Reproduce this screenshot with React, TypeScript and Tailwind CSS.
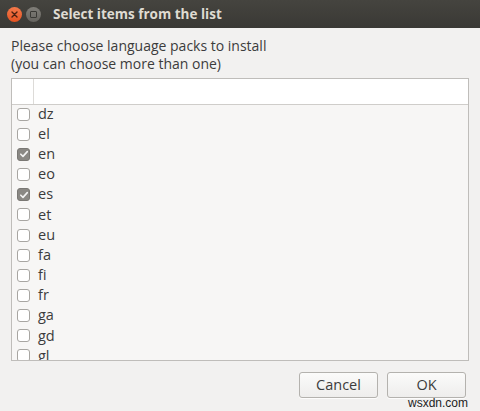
const langs: [string, boolean][] = [
  ["dz", false],
  ["el", false],
  ["en", true],
  ["eo", false],
  ["es", true],
  ["et", false],
  ["eu", false],
  ["fa", false],
  ["fi", false],
  ["fr", false],
  ["ga", false],
  ["gd", false],
  ["gl", false],
];

const Check = ({ on }: { on: boolean }) =>
  on ? (
    <span className="w-[13px] h-[13px] rounded-[3px] bg-[#8a8884] border border-[#7a7874] flex items-center justify-center">
      <svg width="10" height="10" viewBox="0 0 10 10">
        <path d="M1.8 5.2 L4 7.4 L8.3 2.6" fill="none" stroke="#f2f2f2" strokeWidth="1.6" strokeLinecap="round" strokeLinejoin="round" />
      </svg>
    </span>
  ) : (
    <span className="w-[13px] h-[13px] rounded-[3px] bg-white border border-[#a8a6a2]" />
  );

export default function App() {
  return (
    <div
      className="w-[480px] h-[411px] bg-[#f2f1f0] flex flex-col overflow-hidden relative text-[#3c3c3c]"
      style={{ fontFamily: '"Open Sans", "DejaVu Sans", sans-serif' }}
    >
      <div className="h-[28px] bg-gradient-to-b from-[#45443f] to-[#3a3935] flex items-center px-[7px] shrink-0">
        <span className="w-[15px] h-[15px] rounded-full bg-gradient-to-b from-[#f4794a] to-[#e5521f] flex items-center justify-center">
          <svg width="7" height="7" viewBox="0 0 7 7">
            <path d="M1 1 L6 6 M6 1 L1 6" stroke="#4a2010" strokeWidth="1.4" strokeLinecap="round" />
          </svg>
        </span>
        <span className="ml-[4px] w-[15px] h-[15px] rounded-full bg-gradient-to-b from-[#807e78] to-[#66645f] flex items-center justify-center">
          <span className="w-[7px] h-[7px] border border-[#3a3935] rounded-[1px]" />
        </span>
        <span className="ml-[12px] text-[13.5px] font-bold text-[#dfdbd2]">Select items from the list</span>
      </div>

      <div className="px-[11px] pt-[9px] text-[14px] leading-[18px]">
        <div>Please choose language packs to install</div>
        <div>(you can choose more than one)</div>
      </div>

      <div className="mx-[11px] mt-[5px] w-[458px] h-[283px] border border-[#bfbdba] bg-[#f7f6f5] overflow-hidden">
        <div className="h-[26px] bg-white border-b border-[#cfcdca] flex">
          <div className="w-[22px] border-r border-[#dddbd8]" />
        </div>
        <div className="flex flex-col -mt-[1px]">
          {langs.map(([code, on]) => (
            <div key={code} className="h-[20.17px] flex items-center pl-[5px] gap-[8px] shrink-0">
              <Check on={on} />
              <span className="text-[14.5px] leading-none">{code}</span>
            </div>
          ))}
        </div>
      </div>

      <div className="flex justify-end gap-[9px] pr-[14px] mt-[11px]">
        <button className="w-[79px] h-[26px] rounded-[3px] border border-[#b4b2ae] bg-gradient-to-b from-[#fbfbfa] to-[#eeedec] text-[14.5px] text-[#3c3c3c] shadow-[0_1px_0_rgba(255,255,255,0.8)]">
          Cancel
        </button>
        <button className="w-[79px] h-[26px] rounded-[3px] border border-[#b4b2ae] bg-gradient-to-b from-[#fbfbfa] to-[#eeedec] text-[14.5px] text-[#3c3c3c] shadow-[0_1px_0_rgba(255,255,255,0.8)]">
          OK
        </button>
      </div>

      <span
        className="absolute right-[12px] bottom-[1px] text-[12px] leading-[14px] text-[#222]"
        style={{ fontFamily: '"Liberation Sans", sans-serif' }}
      >
        wsxdn.com
      </span>
    </div>
  );
}
